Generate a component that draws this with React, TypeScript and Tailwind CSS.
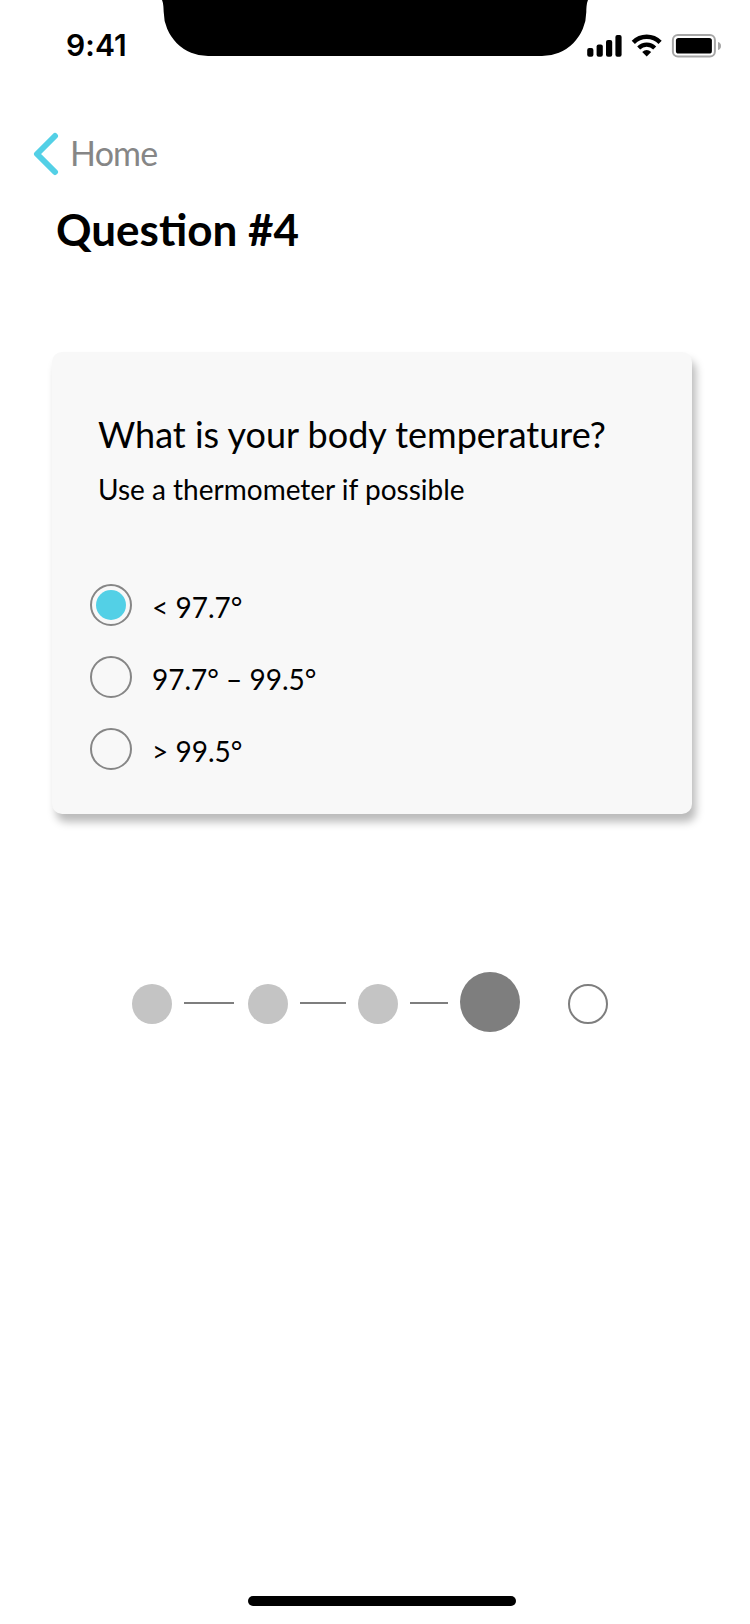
import React from "react";

const options = ["< 97.7°", "97.7° – 99.5°", "> 99.5°"];

function StatusBar() {
  return (
    <header className="flex h-[60px] items-start">
      <div className="w-[160px] shrink-0 pt-[27px] pl-[66px] font-['Inter'] text-[30px] leading-[36px] font-semibold tracking-[0.1px]">
        9:41
      </div>
      <svg className="h-[60px] w-[426px] shrink-0 overflow-visible" viewBox="160 0 426 60">
        <path d="M162 0C163.200 3 163.500 6 163.700 12A44.300 44.300 0 0 0 208 56H542A44.300 44.300 0 0 0 586.300 12C586.500 6 586.800 3 588 0Z" />
      </svg>
      <svg className="h-[60px] w-[164px] shrink-0" viewBox="586 0 164 60">
        <rect x="587.200" y="48" width="6.200" height="8.700" rx="2" />
        <rect x="596.600" y="44.600" width="6.200" height="12.100" rx="2" />
        <rect x="606" y="40" width="6.200" height="16.700" rx="2" />
        <rect x="615.400" y="35" width="6.200" height="21.700" rx="2" />
        <g fill="none" stroke="#000">
          <path d="M633.300 42.400A19 19 0 0 1 660.100 42.400" strokeWidth="4.500" />
          <path d="M638.700 48A11.400 11.400 0 0 1 654.700 48" strokeWidth="4.300" />
        </g>
        <path d="M642.200 51.900Q646.700 48.100 651.200 51.900L646.700 56.500Z" />
        <rect x="672.900" y="35" width="42" height="21.600" rx="5" fill="none" stroke="#a6a6a6" strokeWidth="2" />
        <rect x="675.900" y="38" width="36" height="15.600" rx="2.600" />
        <path d="M718 42C720 42.500 721 44 721 46C721 48 720 49.500 718 50Z" fill="#a6a6a6" />
      </svg>
    </header>
  );
}

export default function App() {
  return (
    <div className="flex h-[1624px] w-[750px] flex-col bg-white font-['Lato',sans-serif] text-black">
      <StatusBar />
      <nav className="mt-[72px] flex h-[44px] items-start pl-[33px]">
        <svg className="h-[44px] w-[26px]" viewBox="0 0 26 44" fill="none" stroke="#53d0e6" strokeWidth="6" strokeLinecap="round" strokeLinejoin="round">
          <path d="M22 4L4 22L22 40" />
        </svg>
        <span className="-mt-px ml-[11px] text-[34px] leading-[44px] tracking-[-0.8px] text-[#868686]">Home</span>
      </nav>
      <h1 className="mt-[27px] ml-[56px] text-[44px] leading-[53px] font-bold">Question #4</h1>
      <main className="mt-[96px] ml-[52px] h-[462px] w-[640px] rounded-[10px] bg-[#f8f8f8] pt-[60px] shadow-[4px_8px_8px_rgba(0,0,0,0.27)]">
        <h2 className="ml-[46px] text-[36px] leading-[44px]">What is your body temperature?</h2>
        <p className="mt-[16px] ml-[46px] text-[28px] leading-[34px]">Use a thermometer if possible</p>
        <div className="mt-[78px] ml-[38px] flex flex-col gap-[30px]">
          {options.map((label, i) => (
            <label key={label} className="flex h-[42px] items-center">
              <span className="flex size-[42px] items-center justify-center rounded-full border-2 border-[#868686]">
                {i === 0 && <span className="size-[30px] rounded-full bg-[#53d0e6]" />}
              </span>
              <span className="ml-[20px] pt-[4px] text-[28px] leading-[34px]">{label}</span>
            </label>
          ))}
        </div>
      </main>
      <div className="mt-[158px] flex h-[60px] items-start pl-[132px]">
        <span className="mt-[12px] size-[40px] rounded-full bg-[#c4c4c4]" />
        <span className="mt-[30px] ml-[12px] h-[2px] w-[50px] bg-[#7e7e7e]" />
        <span className="mt-[12px] ml-[14px] size-[40px] rounded-full bg-[#c4c4c4]" />
        <span className="mt-[30px] ml-[12px] h-[2px] w-[46px] bg-[#7e7e7e]" />
        <span className="mt-[12px] ml-[12px] size-[40px] rounded-full bg-[#c4c4c4]" />
        <span className="mt-[30px] ml-[12px] h-[2px] w-[38px] bg-[#7e7e7e]" />
        <span className="ml-[12px] size-[60px] rounded-full bg-[#7e7e7e]" />
        <span className="mt-[12px] ml-[48px] size-[40px] rounded-full border-2 border-[#7e7e7e]" />
      </div>
      <div className="mt-auto mb-[18px] ml-[248px] h-[10px] w-[268px] rounded-full bg-black" />
    </div>
  );
}
